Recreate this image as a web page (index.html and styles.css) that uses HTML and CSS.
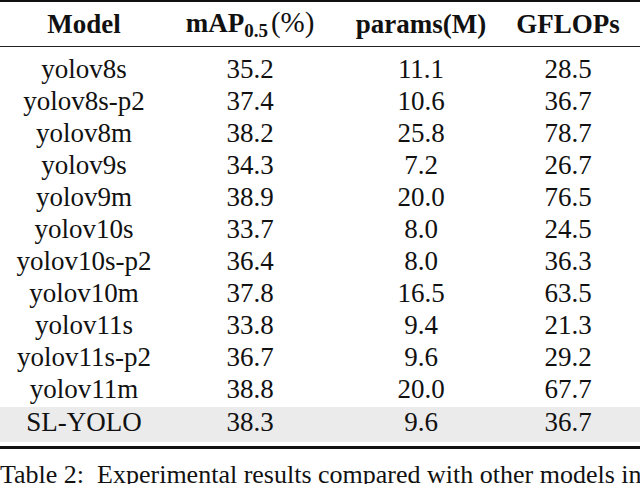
FILE: index.html
```html
<!DOCTYPE html>
<html>
<head>
<meta charset="utf-8">
<link rel="stylesheet" href="styles.css">
</head>
<body>
<div class="table-wrap">
<table class="results">
  <colgroup>
    <col class="c-model"><col class="c-map"><col class="c-params"><col class="c-gflops">
  </colgroup>
  <thead>
    <tr>
      <th>Model</th>
      <th>mAP<sub>0.5</sub><span class="pct">(%)</span></th>
      <th>params(M)</th>
      <th class="last">GFLOPs</th>
    </tr>
  </thead>
  <tbody>
    <tr><td>yolov8s</td><td>35.2</td><td>11.1</td><td class="last">28.5</td></tr>
    <tr><td>yolov8s-p2</td><td>37.4</td><td>10.6</td><td class="last">36.7</td></tr>
    <tr><td>yolov8m</td><td>38.2</td><td>25.8</td><td class="last">78.7</td></tr>
    <tr><td>yolov9s</td><td>34.3</td><td>7.2</td><td class="last">26.7</td></tr>
    <tr><td>yolov9m</td><td>38.9</td><td>20.0</td><td class="last">76.5</td></tr>
    <tr><td>yolov10s</td><td>33.7</td><td>8.0</td><td class="last">24.5</td></tr>
    <tr><td>yolov10s-p2</td><td>36.4</td><td>8.0</td><td class="last">36.3</td></tr>
    <tr><td>yolov10m</td><td>37.8</td><td>16.5</td><td class="last">63.5</td></tr>
    <tr><td>yolov11s</td><td>33.8</td><td>9.4</td><td class="last">21.3</td></tr>
    <tr><td>yolov11s-p2</td><td>36.7</td><td>9.6</td><td class="last">29.2</td></tr>
    <tr><td>yolov11m</td><td>38.8</td><td>20.0</td><td class="last">67.7</td></tr>
    <tr class="ours"><td>SL-YOLO</td><td>38.3</td><td>9.6</td><td class="last">36.7</td></tr>
  </tbody>
</table>
</div>
<p class="caption">Table 2:&nbsp;&nbsp;Experimental results compared with other models in</p>
</body>
</html>
```
FILE: styles.css
```css
html, body {
  margin: 0;
  padding: 0;
  background: #ffffff;
}
body {
  font-family: "Liberation Serif", "Times New Roman", serif;
  color: #111111;
  width: 640px;
  overflow: hidden;
}
.table-wrap {
  border-top: 2px solid #111111;
  border-bottom: 3px solid #111111;
  padding-bottom: 4px;
}
.results {
  border-collapse: separate;
  border-spacing: 0;
  width: 640px;
  table-layout: fixed;
}
.c-model { width: 168px; }
.c-map { width: 164px; }
.c-params { width: 178px; }
.c-gflops { width: 130px; }
.results th {
  font-weight: bold;
  font-size: 27px;
  height: 44px;
  line-height: 30px;
  padding: 0;
  text-align: center;
  vertical-align: middle;
  border-bottom: 1.5px solid #222222;
}
.results th sub {
  font-size: 19px;
  line-height: 1;
  vertical-align: -5px;
}
.results th .pct {
  font-weight: normal;
  font-size: 29px;
  line-height: 1;
  margin-left: 3px;
}
.results td {
  font-size: 27px;
  line-height: 28px;
  padding: 0 0 4px;
  text-align: center;
  vertical-align: top;
}
.results th.last,
.results td.last {
  padding-right: 14px;
}
.results tbody tr:first-child td {
  padding-top: 8px;
}
.results tr.ours td {
  background: #ebebeb;
  padding-top: 1px;
  padding-bottom: 6px;
}
.caption {
  margin: 11px 0 0 0;
  font-size: 26px;
  line-height: 30px;
  white-space: nowrap;
  overflow: hidden;
}
```
